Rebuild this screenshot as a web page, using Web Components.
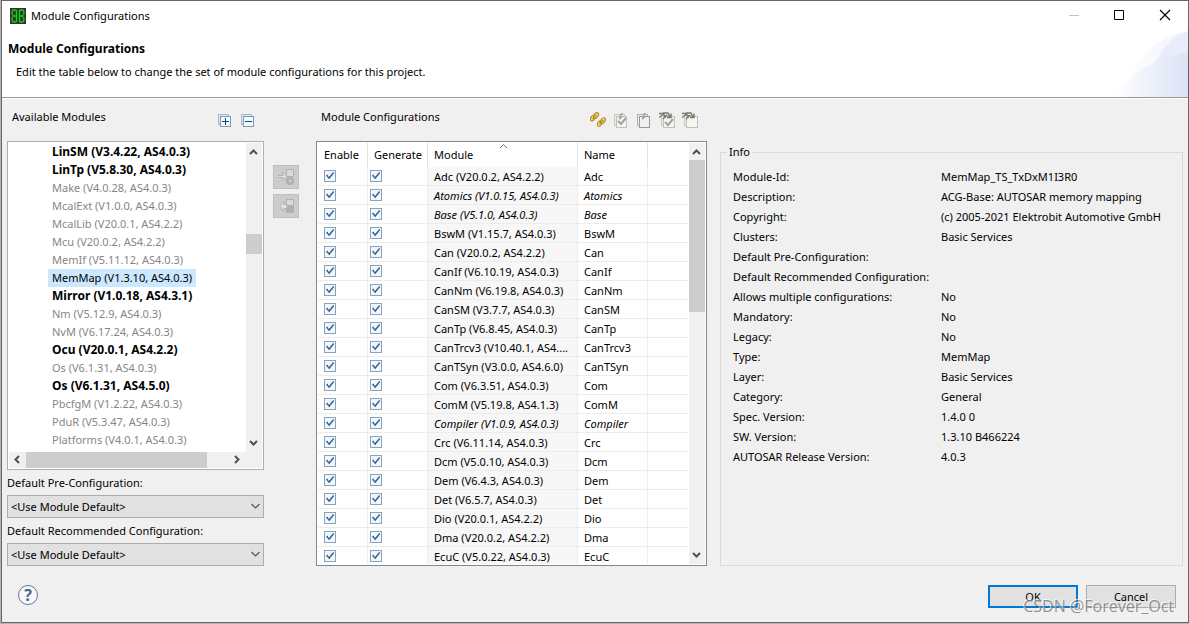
<!DOCTYPE html>
<html lang="en">
<head>
<meta charset="utf-8">
<title>Module Configurations</title>
<style>
  html, body { margin: 0; height: 100%; }
  body {
    font: 11px/18px "Noto Sans", "Open Sans", sans-serif;
    color: #000;
    background: #b4b4b4;
  }
</style>
</head>
<body>
<module-dialog></module-dialog>

<script>
// Every element here is a static shell: a shadow root filled once from a
// string. `view` receives the host so it can read its attributes.
function element(name, css, view) {
  customElements.define(name, class extends HTMLElement {
    connectedCallback() {
      if (this.shadowRoot) return;
      const root = this.attachShadow({ mode: "open" });
      root.innerHTML = `<style>*{box-sizing:border-box}${css}</style>${view(this)}`;
    }
  });
}

// --- icons -----------------------------------------------------------------

const page = (x, y, w, h, stroke, fill) =>
  `<rect x="${x}.5" y="${y}.5" width="${w}" height="${h}" fill="${fill}" stroke="${stroke}"/>`;

const tick = `<path d="M5 9l3 3 5-6" fill="none" stroke="#a2a2a2" stroke-width="2"/>`;
const pin = `<path d="M6 5l2-4h2l-2 4h2l-4 3z" fill="#a8a8a8"/>`;
const arrows = `<path d="M0 1.500h4l3 4M0 5.500l4-3M4 1h5l2 4M4 7l4-4M8 5.500h4v-4" fill="none" stroke="#777" stroke-width="1.400"/>`;

const icons = {
  logo: `<rect width="16" height="16" fill="#333"/>
    <g fill="none" stroke="#0cd60c" stroke-width="1.300">
      <path d="M6.500 3v10M9.500 3v10"/>
      <path d="M7 3Q6 2 4 2Q2 2 2 5Q2 7 4 8Q2 9 2 11Q2 14 4 14Q6 14 7 13M3.500 8H7"/>
      <path d="M9 3Q10 2 12 2Q14 2 14 5Q14 7 12 8Q14 9 14 11Q14 14 12 14Q10 14 9 13M12.500 8H9"/>
    </g>`,
  expand: page(2, 2, 10, 10, "#a9b9cc", "#dfe8f2") + page(4, 4, 10, 10, "#8297b2", "#f3fafd") +
    `<path d="M6 9.500h7M9.500 6v7" stroke="#11477a"/>`,
  collapse: page(2, 2, 10, 10, "#a9b9cc", "#dfe8f2") + page(4, 4, 10, 10, "#8297b2", "#f3fafd") +
    `<path d="M6 9.500h7" stroke="#11477a"/>`,
  link: `<g fill="#f5dc94" stroke="#b98b25" stroke-width="1.200">
      <ellipse cx="2.800" cy="6" rx="2" ry="3" transform="rotate(35 2.800 6)"/>
      <ellipse cx="6" cy="3.500" rx="2" ry="3.200" transform="rotate(35 6 3.500)"/>
      <ellipse cx="9.800" cy="11.500" rx="2" ry="3.200" transform="rotate(35 9.800 11.500)"/>
      <ellipse cx="13" cy="8.500" rx="2" ry="3" transform="rotate(35 13 8.500)"/>
      <path d="M2.500 7l4-4M9.500 12l4-4"/>
    </g>`,
  check: page(1, 2, 10, 11, "#c6c6bd", "#efefea") + page(3, 4, 10, 11, "#c0c0b5", "#f4f4ee") + pin + tick,
  uncheck: page(1, 2, 10, 11, "#b0b0b0", "#eee") + page(3, 4, 10, 11, "#999", "#f1f1f1") + pin,
  checkall: page(2, 3, 10, 10, "#c6c6bd", "#efefea") + page(4, 4, 11, 11, "#c0c0b5", "#f4f4ee") +
    `<g transform="translate(1 1)">${tick}</g>` + arrows,
  uncheckall: page(2, 3, 10, 10, "#c6c6bd", "#efefea") + page(4, 4, 11, 11, "#c0c0b5", "#f7f7f0") + arrows,
  add: `<path d="M8.500 .5h7v7h-7z" fill="#d9d9d9" stroke="#b0b0b0"/>
    <path d="M0 6.500h5v-3l4 4-4 4v-3H0z" fill="#e2e2e2" stroke="#b0b0b0"/>
    <circle cx="12" cy="12" r="2.800" fill="none" stroke="#b0b0b0" stroke-width="2.600"/>`,
  remove: `<path d="M8 7h8v8H8z" fill="#b0b0b0"/>
    <path d="M8.500 1.500h7v6h-7z" fill="#d9d9d9" stroke="#b0b0b0"/>
    <path d="M9 6.500H6v-3l-4 5 4 5v-3h3z" fill="#e2e2e2" stroke="#b0b0b0"/>`,
  minimize: `<path d="M4 7.500h10" stroke="#c4c4c4"/>`,
  maximize: `<path d="M3.500 2.500h9v9h-9z" fill="none" stroke="#000"/>`,
  close: `<path d="M3 2l10 10M13 2L3 12" stroke="#000" stroke-width="1.100"/>`,
};

element("ui-icon", `
  :host { display: block; width: 16px; height: 16px; flex: none; }
  svg { display: block; }
`, (host) => `<svg width="16" height="16" viewBox="0 0 16 16" aria-hidden="true">${icons[host.getAttribute("name")]}</svg>`);

element("icon-button", `
  :host { display: block; }
  button { display: block; margin: 0; padding: 0; border: 0; background: none; }
  :host([boxed]) button { padding: 3px 4px; border: 1px solid #bfbfbf; background: #ccc; }
`, (host) => `<button type="button" aria-label="${host.getAttribute("label")}"><ui-icon name="${host.getAttribute("name")}"></ui-icon></button>`);

// --- scroll bar ------------------------------------------------------------

// `parts` is the track split: before, thumb, after.
element("scroll-bar", `
  :host { display: flex; flex-direction: column; width: 16px; background: #f0f0f0; flex: none; }
  :host([horizontal]) { flex-direction: row; width: auto; height: 16px; }
  svg { display: block; flex: none; }
  .thumb { background: #cdcdcd; }
  i { min-width: 0; min-height: 0; }
`, (host) => {
  const flat = host.hasAttribute("horizontal");
  const [before, thumb, after] = host.getAttribute("parts").split(" ");
  const arrow = (d) => `<svg width="${flat ? 17 : 16}" height="${flat ? 16 : 17}" aria-hidden="true"><path d="${d}" fill="none" stroke="#505050" stroke-width="2"/></svg>`;
  return arrow(flat ? "M10 4L6.500 7.500l3.500 3.500" : "M4 11l3.500-3.500L11 11") +
    `<i style="flex:${before} 0 0"></i><i class="thumb" style="flex:${thumb} 0 0"></i><i style="flex:${after} 0 0"></i>` +
    arrow(flat ? "M6 4l3.500 3.500L6 11" : "M4 6l3.500 3.500L11 6");
});

// --- title and banner ------------------------------------------------------

element("title-bar", `
  :host { display: flex; align-items: center; height: 29px; padding: 0 15px 0 8px; background: #fff; }
  span { flex: 1; margin-left: 5px; }
  nav { display: flex; gap: 30px; }
`, () => `<ui-icon name="logo"></ui-icon><span><slot></slot></span>
  <nav>
    <icon-button name="minimize" label="Minimize"></icon-button>
    <icon-button name="maximize" label="Maximize"></icon-button>
    <icon-button name="close" label="Close"></icon-button>
  </nav>`);

element("dialog-banner", `
  :host { display: flex; justify-content: space-between; height: 68px; background: #fff; border-bottom: 1px solid #979797; }
  .text { padding: 9px 0 0 6px; }
  h1 { margin: 0; font-size: 12px; line-height: 20px; }
  p { margin: 4px 0 0 8px; }
  svg { display: block; }
`, () => `<div class="text"><h1><slot name="heading"></slot></h1><p><slot></slot></p></div>
  <svg width="80" height="67" aria-hidden="true">
    <defs>
      <linearGradient id="g"><stop offset="0" stop-color="#fff"/><stop offset="1" stop-color="#dbe2f6"/></linearGradient>
      <linearGradient id="h"><stop offset="0" stop-color="#fff"/><stop offset="1" stop-color="#f1f4fc"/></linearGradient>
    </defs>
    <path d="M10 67Q38 6 80 1V67z" fill="url(#h)"/>
    <path d="M44 38Q60 6 80 1V38z" fill="#e8edf9"/>
    <path d="M6 67Q32 30 80 22V67z" fill="url(#g)"/>
  </svg>`);

// --- left column -----------------------------------------------------------

// [label, state] where state is "" (already used), "free" or "selected"
const available = [
  ["LinSM (V3.4.22, AS4.0.3)", "free"],
  ["LinTp (V5.8.30, AS4.0.3)", "free"],
  ["Make (V4.0.28, AS4.0.3)", ""],
  ["McalExt (V1.0.0, AS4.0.3)", ""],
  ["McalLib (V20.0.1, AS4.2.2)", ""],
  ["Mcu (V20.0.2, AS4.2.2)", ""],
  ["MemIf (V5.11.12, AS4.0.3)", ""],
  ["MemMap (V1.3.10, AS4.0.3)", "selected"],
  ["Mirror (V1.0.18, AS4.3.1)", "free"],
  ["Nm (V5.12.9, AS4.0.3)", ""],
  ["NvM (V6.17.24, AS4.0.3)", ""],
  ["Ocu (V20.0.1, AS4.2.2)", "free"],
  ["Os (V6.1.31, AS4.0.3)", ""],
  ["Os (V6.1.31, AS4.5.0)", "free"],
  ["PbcfgM (V1.2.22, AS4.0.3)", ""],
  ["PduR (V5.3.47, AS4.0.3)", ""],
  ["Platforms (V4.0.1, AS4.0.3)", ""],
];

element("module-tree", `
  :host { display: grid; grid-template: minmax(0, 1fr) 16px / minmax(0, 1fr) 16px; padding: 1px; border: 1px solid #adadb3; background: #fff; overflow: hidden; }
  ul { margin: 0; padding: 0 0 0 39px; list-style: none; overflow: hidden; white-space: nowrap; }
  li { height: 18px; color: #868686; }
  span { display: inline-block; padding: 0 4px; }
  .free { color: #000; font-size: 12px; font-weight: bold; }
  .selected { color: #000; }
  .selected span { background: #cce8ff; }
  .corner { background: #f0f0f0; }
`, () => `<ul>${available.map(([text, state]) => `<li class="${state}"><span>${text}</span></li>`).join("")}</ul>
  <scroll-bar parts="74 20 181"></scroll-bar>
  <scroll-bar horizontal parts="0 181 22"></scroll-bar>
  <div class="corner"></div>`);

element("combo-box", `
  :host { display: block; }
  label { display: block; height: 25px; line-height: 25px; }
  div { display: grid; align-items: center; }
  select, svg { grid-area: 1 / 1; }
  select { appearance: none; width: 100%; height: 23px; margin: 0; padding: 0 3px; border: 1px solid #adadad; border-radius: 0; background: #e1e1e1; color: #000; font: inherit; }
  svg { justify-self: end; margin-right: 3px; pointer-events: none; }
`, (host) => `<label for="box">${host.getAttribute("label")}</label>
  <div>
    <select id="box"><option>&lt;Use Module Default&gt;</option></select>
    <svg width="11" height="7" aria-hidden="true"><path d="M1.500 1l4 4 4-4" fill="none" stroke="#555" stroke-width="1.200"/></svg>
  </div>`);

element("section-head", `
  :host { display: flex; justify-content: space-between; height: 42px; flex: none; }
  h2 { margin: 0; padding: 9px 0 0 5px; font: inherit; }
  div { display: flex; gap: 7px; padding: 13px 9px 0 0; }
`, () => `<h2><slot name="title"></slot></h2><div><slot></slot></div>`);

element("available-modules", `
  :host { display: flex; flex-direction: column; min-height: 0; }
  module-tree { flex: 1; min-height: 0; }
`, () => `<section-head>
    <span slot="title">Available Modules</span>
    <icon-button name="expand" label="Expand all"></icon-button>
    <icon-button name="collapse" label="Collapse all"></icon-button>
  </section-head>
  <module-tree></module-tree>
  <combo-box label="Default Pre-Configuration:"></combo-box>
  <combo-box label="Default Recommended Configuration:"></combo-box>`);

// --- configuration table ---------------------------------------------------

// [module, name, italic]
const configured = [
  ["Adc (V20.0.2, AS4.2.2)", "Adc"],
  ["Atomics (V1.0.15, AS4.0.3)", "Atomics", true],
  ["Base (V5.1.0, AS4.0.3)", "Base", true],
  ["BswM (V1.15.7, AS4.0.3)", "BswM"],
  ["Can (V20.0.2, AS4.2.2)", "Can"],
  ["CanIf (V6.10.19, AS4.0.3)", "CanIf"],
  ["CanNm (V6.19.8, AS4.0.3)", "CanNm"],
  ["CanSM (V3.7.7, AS4.0.3)", "CanSM"],
  ["CanTp (V6.8.45, AS4.0.3)", "CanTp"],
  ["CanTrcv3 (V10.40.1, AS4....", "CanTrcv3"],
  ["CanTSyn (V3.0.0, AS4.6.0)", "CanTSyn"],
  ["Com (V6.3.51, AS4.0.3)", "Com"],
  ["ComM (V5.19.8, AS4.1.3)", "ComM"],
  ["Compiler (V1.0.9, AS4.0.3)", "Compiler", true],
  ["Crc (V6.11.14, AS4.0.3)", "Crc"],
  ["Dcm (V5.0.10, AS4.0.3)", "Dcm"],
  ["Dem (V6.4.3, AS4.0.3)", "Dem"],
  ["Det (V6.5.7, AS4.0.3)", "Det"],
  ["Dio (V20.0.1, AS4.2.2)", "Dio"],
  ["Dma (V20.0.2, AS4.2.2)", "Dma"],
  ["EcuC (V5.0.22, AS4.0.3)", "EcuC"],
];

element("config-table", `
  :host { display: flex; padding: 1px; border: 1px solid #828790; background: #fff; overflow: hidden; }
  .view { flex: 1; min-width: 0; overflow: hidden; }
  table { width: 100%; border-collapse: separate; border-spacing: 0; table-layout: fixed; }
  th, td { padding: 0 0 0 6px; text-align: left; font-weight: normal; white-space: nowrap; border-right: 1px solid #ececec; }
  th:last-child, td:last-child { border-right: 0; }
  th { height: 24px; border-color: #e0e0e0; }
  td { height: 19px; padding-top: 2px; line-height: 16px; border-bottom: 1px solid #ececec; }
  td:nth-child(-n+2) { padding-top: 0; }
  td:nth-child(2) { padding-left: 2px; }
  td:nth-child(3) { background: #f7f7f7; }
  .italic { font-style: italic; }
  .sorted { position: relative; }
  .sorted svg { position: absolute; top: 0; left: calc(50% - 4px); }
  input { appearance: none; display: block; width: 12px; height: 12px; margin: 0; border: 1px solid #8ba0bd; background: #eef7fc; }
  input:checked::before { content: ""; display: block; width: 10px; height: 10px; background: #3e5c86; clip-path: polygon(10% 45%, 22% 35%, 40% 60%, 82% 10%, 92% 20%, 42% 82%); }
  scroll-bar { margin: 0 0 0 1px; }
`, () => `<div class="view"><table>
  <colgroup><col style="width:50px"><col style="width:60px"><col style="width:150px"><col style="width:70px"><col></colgroup>
  <thead><tr>
    <th>Enable</th><th>Generate</th>
    <th class="sorted">Module<svg width="9" height="6" aria-hidden="true"><path d="M1 5l3.500-3.500L8 5" fill="none" stroke="#777"/></svg></th>
    <th>Name</th><th></th>
  </tr></thead>
  <tbody>${configured.map(([module, name, italic]) => `<tr${italic ? ' class="italic"' : ""}>
    <td><input type="checkbox" checked aria-label="Enable ${name}"></td>
    <td><input type="checkbox" checked aria-label="Generate ${name}"></td>
    <td>${module}</td><td>${name}</td><td></td>
  </tr>`).join("")}</tbody>
</table></div>
<scroll-bar parts="0 152 236"></scroll-bar>`);

element("module-configurations", `
  :host { display: flex; flex-direction: column; min-height: 0; }
  config-table { flex: 1; min-height: 0; }
`, () => `<section-head>
    <span slot="title">Module Configurations</span>
    <icon-button name="link" label="Link"></icon-button>
    <icon-button name="check" label="Enable selected"></icon-button>
    <icon-button name="uncheck" label="Disable selected"></icon-button>
    <icon-button name="checkall" label="Enable all"></icon-button>
    <icon-button name="uncheckall" label="Disable all"></icon-button>
  </section-head>
  <config-table></config-table>`);

// --- info ------------------------------------------------------------------

const info = [
  ["Module-Id:", "MemMap_TS_TxDxM1I3R0"],
  ["Description:", "ACG-Base: AUTOSAR memory mapping"],
  ["Copyright:", "(c) 2005-2021 Elektrobit Automotive GmbH"],
  ["Clusters:", "Basic Services"],
  ["Default Pre-Configuration:", ""],
  ["Default Recommended Configuration:", ""],
  ["Allows multiple configurations:", "No"],
  ["Mandatory:", "No"],
  ["Legacy:", "No"],
  ["Type:", "MemMap"],
  ["Layer:", "Basic Services"],
  ["Category:", "General"],
  ["Spec. Version:", "1.4.0 0"],
  ["SW. Version:", "1.3.10 B466224"],
  ["AUTOSAR Release Version:", "4.0.3"],
];

element("info-panel", `
  :host { display: flex; padding: 44px 0 0 13px; min-height: 0; }
  fieldset { flex: 1; min-width: 0; margin: 0; padding: 6px 12px; border: 1px solid #dcdcdc; }
  legend { margin-left: -6px; padding: 0 2px; line-height: 18px; }
  dl { display: grid; grid-template-columns: 208px 1fr; margin: 0; line-height: 20px; white-space: nowrap; }
  dt, dd { height: 20px; margin: 0; }
`, () => `<fieldset><legend>Info</legend>
  <dl>${info.map(([key, value]) => `<dt>${key}</dt><dd>${value}</dd>`).join("")}</dl>
</fieldset>`);

// --- footer ----------------------------------------------------------------

element("push-button", `
  :host { display: block; width: 90px; }
  button { width: 100%; height: 23px; margin: 0; padding: 0; border: 1px solid #adadad; background: #e1e1e1; color: #000; font: inherit; }
  :host([primary]) button { border: 2px solid #0078d7; }
`, () => `<button type="button"><slot></slot></button>`);

element("dialog-footer", `
  :host { display: flex; align-items: flex-start; gap: 8px; height: 56px; padding: 19px 12px 0 16px; position: relative; }
  .help { display: block; margin: 0 auto 0 0; padding: 0; width: 20px; height: 20px; border: 1px solid #5f7594; border-radius: 50%; background: #f6f8fa; color: #4d6588; font: bold 16px/18px "Noto Sans", sans-serif; }
  .mark { position: absolute; right: 14px; bottom: 6px; font: 16px/20px "Open Sans", sans-serif; color: rgba(120, 120, 120, .8); text-shadow: -1px -1px 0 rgba(255, 255, 255, .7); pointer-events: none; }
`, () => `<button class="help" type="button" aria-label="Help">?</button>
  <push-button primary>OK</push-button>
  <push-button>Cancel</push-button>
  <span class="mark">CSDN @Forever_Oct</span>`);

// --- dialog ----------------------------------------------------------------

element("module-dialog", `
  :host { display: flex; flex-direction: column; height: calc(100vh - 1px); margin-left: 1px; border: 1px solid #666; background: #f0f0f0; box-sizing: border-box; }
  title-bar, dialog-banner, dialog-footer { flex: none; }
  main { flex: 1; min-height: 0; display: grid; grid-template: minmax(0, 1fr) / minmax(0, 257fr) 52px minmax(0, 391fr) minmax(0, 476fr); padding: 0 5px; border-top: 1px solid #fff; }
  .move { display: flex; flex-direction: column; gap: 5px; padding: 66px 17px 0 9px; }
`, () => `<title-bar>Module Configurations</title-bar>
  <dialog-banner><span slot="heading">Module Configurations</span>Edit the table below to change the set of module configurations for this project.</dialog-banner>
  <main>
    <available-modules></available-modules>
    <div class="move">
      <icon-button boxed name="add" label="Add module"></icon-button>
      <icon-button boxed name="remove" label="Remove module"></icon-button>
    </div>
    <module-configurations></module-configurations>
    <info-panel></info-panel>
  </main>
  <dialog-footer></dialog-footer>`);
</script>
</body>
</html>
